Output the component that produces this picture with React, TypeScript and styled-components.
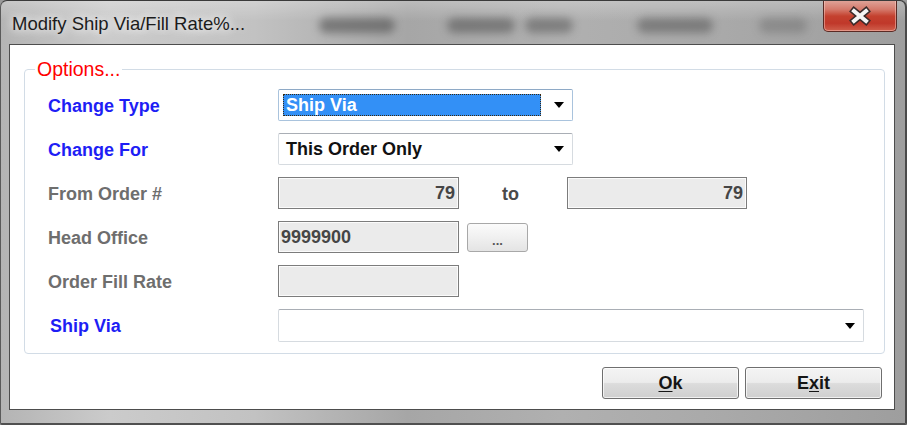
import React from 'react';
import styled, { createGlobalStyle } from 'styled-components';

const Global = createGlobalStyle`
  html, body { margin: 0; padding: 0; background: #9a9a9a; }
  body {
    width: 907px; height: 425px; overflow: hidden;
    font-family: "Liberation Sans", Arial, sans-serif;
  }
`;

const Window = styled.div`
  width: 907px;
  height: 425px;
  box-sizing: border-box;
  display: flex;
  flex-direction: column;
  border-top: 1px solid #3a3a3a;
  border-left: 1px solid #5a5a5a;
  border-right: 2px solid #4a4a4a;
  border-bottom: 2px solid #505050;
  border-radius: 7px 7px 2px 2px;
  background:
    linear-gradient(180deg, rgba(255,255,255,0.25) 0px, rgba(255,255,255,0) 20px),
    linear-gradient(90deg, #b4b4b4 0%, #cbcbcb 12%, #c2c2c2 28%, #a6a6a6 45%, #b0b0b0 62%, #a9a9a9 80%, #9e9e9e 100%);
  overflow: hidden;
`;

const TitleBar = styled.div`
  height: 43px;
  flex: none;
  display: flex;
  align-items: flex-start;
  padding-left: 11px;
  box-sizing: border-box;
`;

const Title = styled.div`
  margin-top: 12px;
  font-size: 18.5px;
  color: #1c1c1c;
  white-space: nowrap;
  text-shadow: 0 0 8px rgba(255,255,255,0.95), 0 0 14px rgba(255,255,255,0.8);
`;

const Smudges = styled.div`
  display: flex;
  margin-left: 74px;
  margin-top: 17px;
`;

const Smudge = styled.span<{ $w: number; $gap: number; $o: number }>`
  display: block;
  width: ${p => p.$w}px;
  height: 15px;
  margin-right: ${p => p.$gap}px;
  border-radius: 8px;
  background: rgba(60, 60, 60, ${p => p.$o});
  filter: blur(4px);
`;

const CloseButton = styled.div`
  margin-left: auto;
  margin-right: 8px;
  margin-top: -1px;
  width: 74px;
  height: 32px;
  box-sizing: border-box;
  border: 1px solid #5a2a24;
  border-top: none;
  border-radius: 0 0 5px 5px;
  background: linear-gradient(180deg, #e0a69c 0%, #d57a6c 30%, #c4412f 52%, #c0382a 75%, #d0604d 100%);
  box-shadow: inset 0 0 0 1px rgba(255, 220, 210, 0.45);
  display: flex;
  align-items: center;
  justify-content: center;
`;

const Frame = styled.div`
  flex: 1;
  display: flex;
  padding: 0 10px 13px 8px;
  min-height: 0;
`;

const Client = styled.div`
  flex: 1;
  background: #ffffff;
  border: 1px solid #4d4d4d;
  display: flex;
  flex-direction: column;
`;

const Group = styled.fieldset`
  margin: 14px 9px 0 14px;
  padding: 0;
  border: 1px solid #d2dce6;
  border-radius: 4px;
  min-width: 0;
`;

const Legend = styled.legend`
  margin-left: 10px;
  padding: 0 2px;
  font-size: 19.5px;
  line-height: 20px;
  color: #ff0000;
`;

const Form = styled.div`
  display: grid;
  grid-template-columns: 230px 1fr;
  grid-template-rows: repeat(5, 32px) 33px;
  row-gap: 12px;
  padding: 10px 20px 11px 23px;
  align-items: center;
`;

const Label = styled.div<{ $active?: boolean; $indent?: number }>`
  font-size: 18px;
  font-weight: bold;
  color: ${p => (p.$active ? '#1e1ef5' : '#6e6e6e')};
  padding-left: ${p => p.$indent || 0}px;
  padding-top: 2px;
  white-space: nowrap;
`;

const Cell = styled.div`
  display: flex;
  align-items: center;
  height: 100%;
`;

const Combo = styled.div<{ $w: number; $focus?: boolean }>`
  width: ${p => p.$w}px;
  height: 100%;
  box-sizing: border-box;
  border: 1px solid ${p => (p.$focus ? '#a9c3dd' : '#d6dbe0')};
  border-top-color: ${p => (p.$focus ? '#8ea9c6' : '#a9aeb5')};
  border-radius: 2px;
  background: #fff;
  display: flex;
  align-items: center;
  padding: 4px 8px 4px 4px;
`;

const ComboText = styled.div<{ $selected?: boolean }>`
  flex: 1;
  height: 100%;
  box-sizing: border-box;
  display: flex;
  align-items: center;
  padding-left: 3px;
  padding-top: 1px;
  margin-right: 13px;
  font-size: 18px;
  font-weight: bold;
  color: ${p => (p.$selected ? '#ffffff' : '#111111')};
  background: ${p => (p.$selected ? '#3390f6' : 'transparent')};
  outline: ${p => (p.$selected ? '1px dotted #3a2a10' : 'none')};
  outline-offset: -1px;
`;

const Arrow = styled.span`
  width: 0;
  height: 0;
  border-left: 5px solid transparent;
  border-right: 5px solid transparent;
  border-top: 6px solid #000;
  margin-left: auto;
`;

const Field = styled.div<{ $w: number; $right?: boolean }>`
  width: ${p => p.$w}px;
  height: 100%;
  box-sizing: border-box;
  border: 1px solid #7c7c7c;
  box-shadow: inset 0 0 0 1px #fbfbfb;
  background: #ebebeb;
  display: flex;
  align-items: center;
  justify-content: ${p => (p.$right ? 'flex-end' : 'flex-start')};
  padding: 1px 3px 0 2px;
  font-size: 18px;
  font-weight: bold;
  color: #454545;
`;

const ToLabel = styled.div`
  width: 108px;
  box-sizing: border-box;
  padding-left: 43px;
  padding-top: 2px;
  font-size: 18px;
  font-weight: bold;
  color: #4a4a4a;
`;

const BrowseButton = styled.div`
  margin-left: 8px;
  width: 61px;
  height: 29px;
  box-sizing: border-box;
  border: 1px solid #a8a8a8;
  border-radius: 3px;
  background: linear-gradient(180deg, #fbfbfb 0%, #f0f0f0 50%, #e4e4e4 100%);
  display: flex;
  align-items: flex-end;
  justify-content: center;
  padding-bottom: 5px;
  font-size: 13px;
  font-weight: bold;
  color: #555;
  line-height: 10px;
`;

const Footer = styled.div`
  display: flex;
  justify-content: flex-end;
  gap: 6px;
  padding: 13px 12px 0 0;
`;

const Button = styled.div`
  width: 137px;
  height: 32px;
  box-sizing: border-box;
  border: 1px solid #6f6f6f;
  border-radius: 3px;
  background: linear-gradient(180deg, #f4f4f4 0%, #ececec 48%, #dcdcdc 52%, #cfcfcf 100%);
  box-shadow: inset 0 0 0 1px rgba(255,255,255,0.7);
  display: flex;
  align-items: center;
  justify-content: center;
  font-size: 18px;
  font-weight: bold;
  color: #151515;
`;

const Key = styled.span`
  text-decoration: underline;
  text-underline-offset: 2px;
`;

const CloseGlyph = () => (
  <svg width="26" height="20" viewBox="0 0 26 20">
    <path d="M7 5 L19 15 M19 5 L7 15" stroke="#3a2a2a" strokeWidth="7" strokeLinecap="square" fill="none" />
    <path d="M7 5 L19 15 M19 5 L7 15" stroke="#f4f4f4" strokeWidth="4" strokeLinecap="square" fill="none" />
  </svg>
);

export default function App() {
  return (
    <>
      <Global />
      <Window>
        <TitleBar>
          <Title>Modify Ship Via/Fill Rate%...</Title>
          <Smudges>
            <Smudge $w={76} $gap={52} $o={0.5} />
            <Smudge $w={68} $gap={10} $o={0.45} />
            <Smudge $w={48} $gap={64} $o={0.42} />
            <Smudge $w={76} $gap={46} $o={0.42} />
            <Smudge $w={48} $gap={0} $o={0.25} />
          </Smudges>
          <CloseButton>
            <CloseGlyph />
          </CloseButton>
        </TitleBar>
        <Frame>
          <Client>
            <Group>
              <Legend>Options...</Legend>
              <Form>
                <Label $active>Change Type</Label>
                <Cell>
                  <Combo $w={295} $focus>
                    <ComboText $selected>Ship Via</ComboText>
                    <Arrow />
                  </Combo>
                </Cell>

                <Label $active>Change For</Label>
                <Cell>
                  <Combo $w={295}>
                    <ComboText>This Order Only</ComboText>
                    <Arrow />
                  </Combo>
                </Cell>

                <Label>From Order #</Label>
                <Cell>
                  <Field $w={181} $right>79</Field>
                  <ToLabel>to</ToLabel>
                  <Field $w={180} $right>79</Field>
                </Cell>

                <Label>Head Office</Label>
                <Cell>
                  <Field $w={181}>9999900</Field>
                  <BrowseButton>...</BrowseButton>
                </Cell>

                <Label>Order Fill Rate</Label>
                <Cell>
                  <Field $w={181} />
                </Cell>

                <Label $active $indent={2}>Ship Via</Label>
                <Cell>
                  <Combo $w={586}>
                    <ComboText />
                    <Arrow />
                  </Combo>
                </Cell>
              </Form>
            </Group>
            <Footer>
              <Button><Key>O</Key>k</Button>
              <Button>E<Key>x</Key>it</Button>
            </Footer>
          </Client>
        </Frame>
      </Window>
    </>
  );
}
